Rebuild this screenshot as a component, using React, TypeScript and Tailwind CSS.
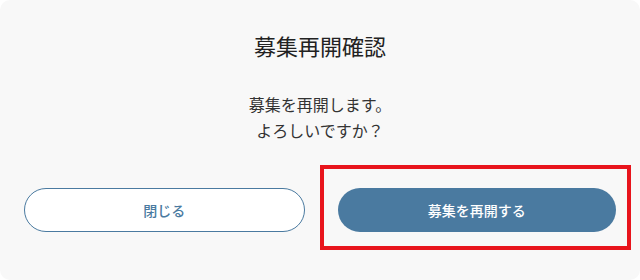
export default function App() {
  return (
    <div className="w-[640px] h-[280px] bg-white" style={{ fontFamily: '"Noto Sans CJK JP", "Noto Sans", sans-serif' }}>
      <div className="relative w-full h-full rounded-[10px] bg-[#f8f8f8] flex flex-col items-center">
        {/* Title */}
        <h2 className="pt-[29px] text-[22px] leading-[32px] text-[#222]">募集再開確認</h2>

        {/* Message */}
        <p className="mt-[30px] text-[16px] leading-[26px] text-[#333] text-center">
          募集を再開します。
          <br />
          よろしいですか？
        </p>

        {/* Actions */}
        <div className="mt-[45px] w-full px-[24px] flex gap-[33px]">
          <button className="flex-1 h-[44px] rounded-full border border-[#4a7aa0] bg-white text-[#4a7aa0] text-[14px] font-medium">
            閉じる
          </button>
          <button className="flex-1 h-[44px] rounded-full bg-[#4a7aa0] text-white text-[14px] font-medium">
            募集を再開する
          </button>
        </div>

        {/* highlight annotation */}
        <div className="absolute left-[320px] top-[165px] w-[311px] h-[85px] border-[4px] border-[#e8141c] pointer-events-none" />
      </div>
    </div>
  );
}
